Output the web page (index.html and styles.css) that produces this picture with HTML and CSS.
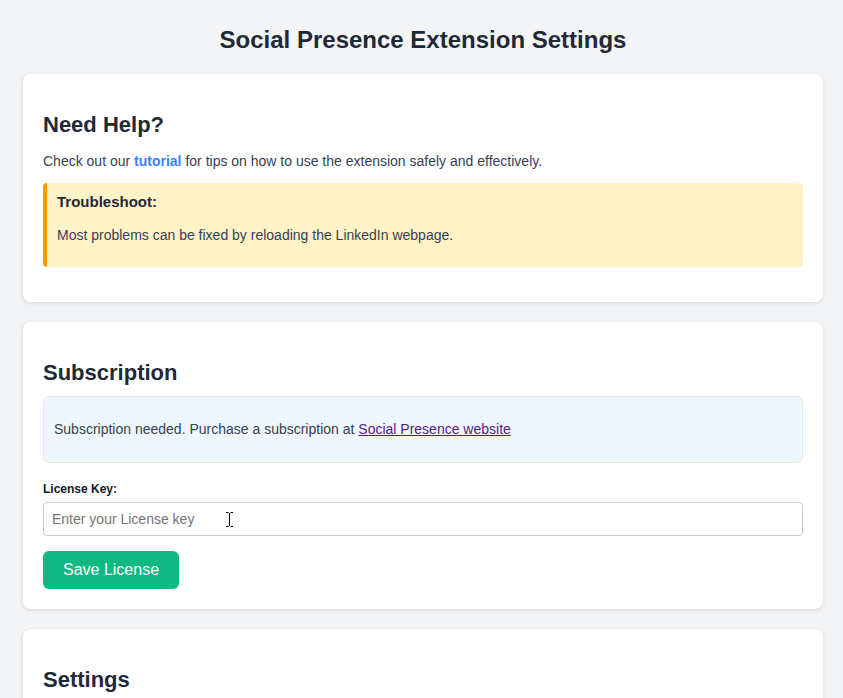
FILE: index.html
```html
<!DOCTYPE html>
<html lang="en">
<head>
<meta charset="utf-8">
<title>Social Presence Extension Settings</title>
<link rel="stylesheet" href="styles.css">
</head>
<body>
<div class="container">
  <h1 class="page-title">Social Presence Extension Settings</h1>

  <section class="card">
    <h2 class="card-title">Need Help?</h2>
    <p class="text lead">Check out our <a class="tutorial-link" href="#">tutorial</a> for tips on how to use the extension safely and effectively.</p>
    <div class="notice">
      <h4 class="notice-title">Troubleshoot:</h4>
      <p class="notice-text">Most problems can be fixed by reloading the LinkedIn webpage.</p>
    </div>
  </section>

  <section class="card">
    <h2 class="card-title">Subscription</h2>
    <div class="info-box">
      <p class="text">Subscription needed. Purchase a subscription at <a class="site-link" href="#">Social Presence website</a></p>
    </div>
    <label class="field-label" for="license">License Key:</label>
    <div class="input-wrap">
      <input id="license" class="text-input" type="text" placeholder="Enter your License key">
      <svg class="ibeam" width="9" height="17" viewBox="0 0 9 17" aria-hidden="true">
        <path d="M1 1.5h2.5M5.5 1.5H8M4.5 2v13M1 15.5h2.5M5.5 15.5H8" stroke="#fff" stroke-width="3" fill="none"/>
        <path d="M1 1.5h2.5M5.5 1.5H8M4.5 2v13M1 15.5h2.5M5.5 15.5H8" stroke="#000" stroke-width="1" fill="none"/>
      </svg>
    </div>
    <button class="btn-save" type="button">Save License</button>
  </section>

  <section class="card">
    <h2 class="card-title">Settings</h2>
  </section>
</div>
</body>
</html>
```

FILE: styles.css
```css
* {
  box-sizing: border-box;
}

html, body {
  margin: 0;
  padding: 0;
}

body {
  background: #f3f4f6;
  font-family: "Liberation Sans", Arial, sans-serif;
  color: #374151;
}

.container {
  width: 843px;
  padding: 0 20px 20px 23px;
}

.page-title {
  margin: 0;
  padding: 26px 0 21px;
  font-size: 24px;
  line-height: 27px;
  font-weight: 700;
  color: #1f2937;
  text-align: center;
}

.card {
  background: #ffffff;
  border-radius: 8px;
  box-shadow: 0 1px 4px rgba(0, 0, 0, 0.12);
  padding: 20px;
  margin-bottom: 20px;
}

.card-title {
  margin: 18px 0 11px;
  font-size: 22px;
  line-height: 25px;
  font-weight: 700;
  color: #1f2937;
}

.text {
  margin: 14px 0;
  font-size: 14px;
  line-height: 16px;
  color: #374151;
}

.lead {
  margin-top: 16px;
}

.tutorial-link {
  color: #3b82f6;
  font-weight: 700;
  text-decoration: none;
}

.notice {
  background: #fef3c7;
  border-left: 4px solid #f59e0b;
  border-radius: 4px;
  padding: 10px;
  margin-bottom: 15px;
}

.notice-title {
  margin: 0;
  font-size: 15px;
  line-height: 17px;
  font-weight: 700;
  color: #1f2937;
}

.notice-text {
  margin: 17px 0 14px;
  font-size: 14px;
  line-height: 16px;
  color: #374151;
}

.info-box {
  background: #eff6ff;
  border: 1px solid #e5e7eb;
  border-radius: 6px;
  padding: 10px 10px 11px;
  margin-bottom: 19px;
}

.site-link {
  color: #551a8b;
  text-decoration: underline;
}

.field-label {
  display: block;
  font-size: 12px;
  line-height: 14px;
  font-weight: 700;
  color: #111827;
  margin-bottom: 6px;
}

.input-wrap {
  position: relative;
  margin-bottom: 15px;
}

.text-input {
  display: block;
  width: 100%;
  height: 34px;
  border: 1px solid #cccccc;
  border-radius: 4px;
  padding: 0 8px;
  font-family: "Liberation Sans", Arial, sans-serif;
  font-size: 14px;
  color: #374151;
  background: #ffffff;
}

.text-input::placeholder {
  color: #757575;
}

.ibeam {
  position: absolute;
  left: 182px;
  top: 9px;
}

.btn-save {
  display: block;
  height: 38px;
  padding: 0 20px;
  border: none;
  border-radius: 6px;
  background: #10b981;
  color: #ffffff;
  font-family: "Liberation Sans", Arial, sans-serif;
  font-size: 16px;
  cursor: pointer;
}
```
